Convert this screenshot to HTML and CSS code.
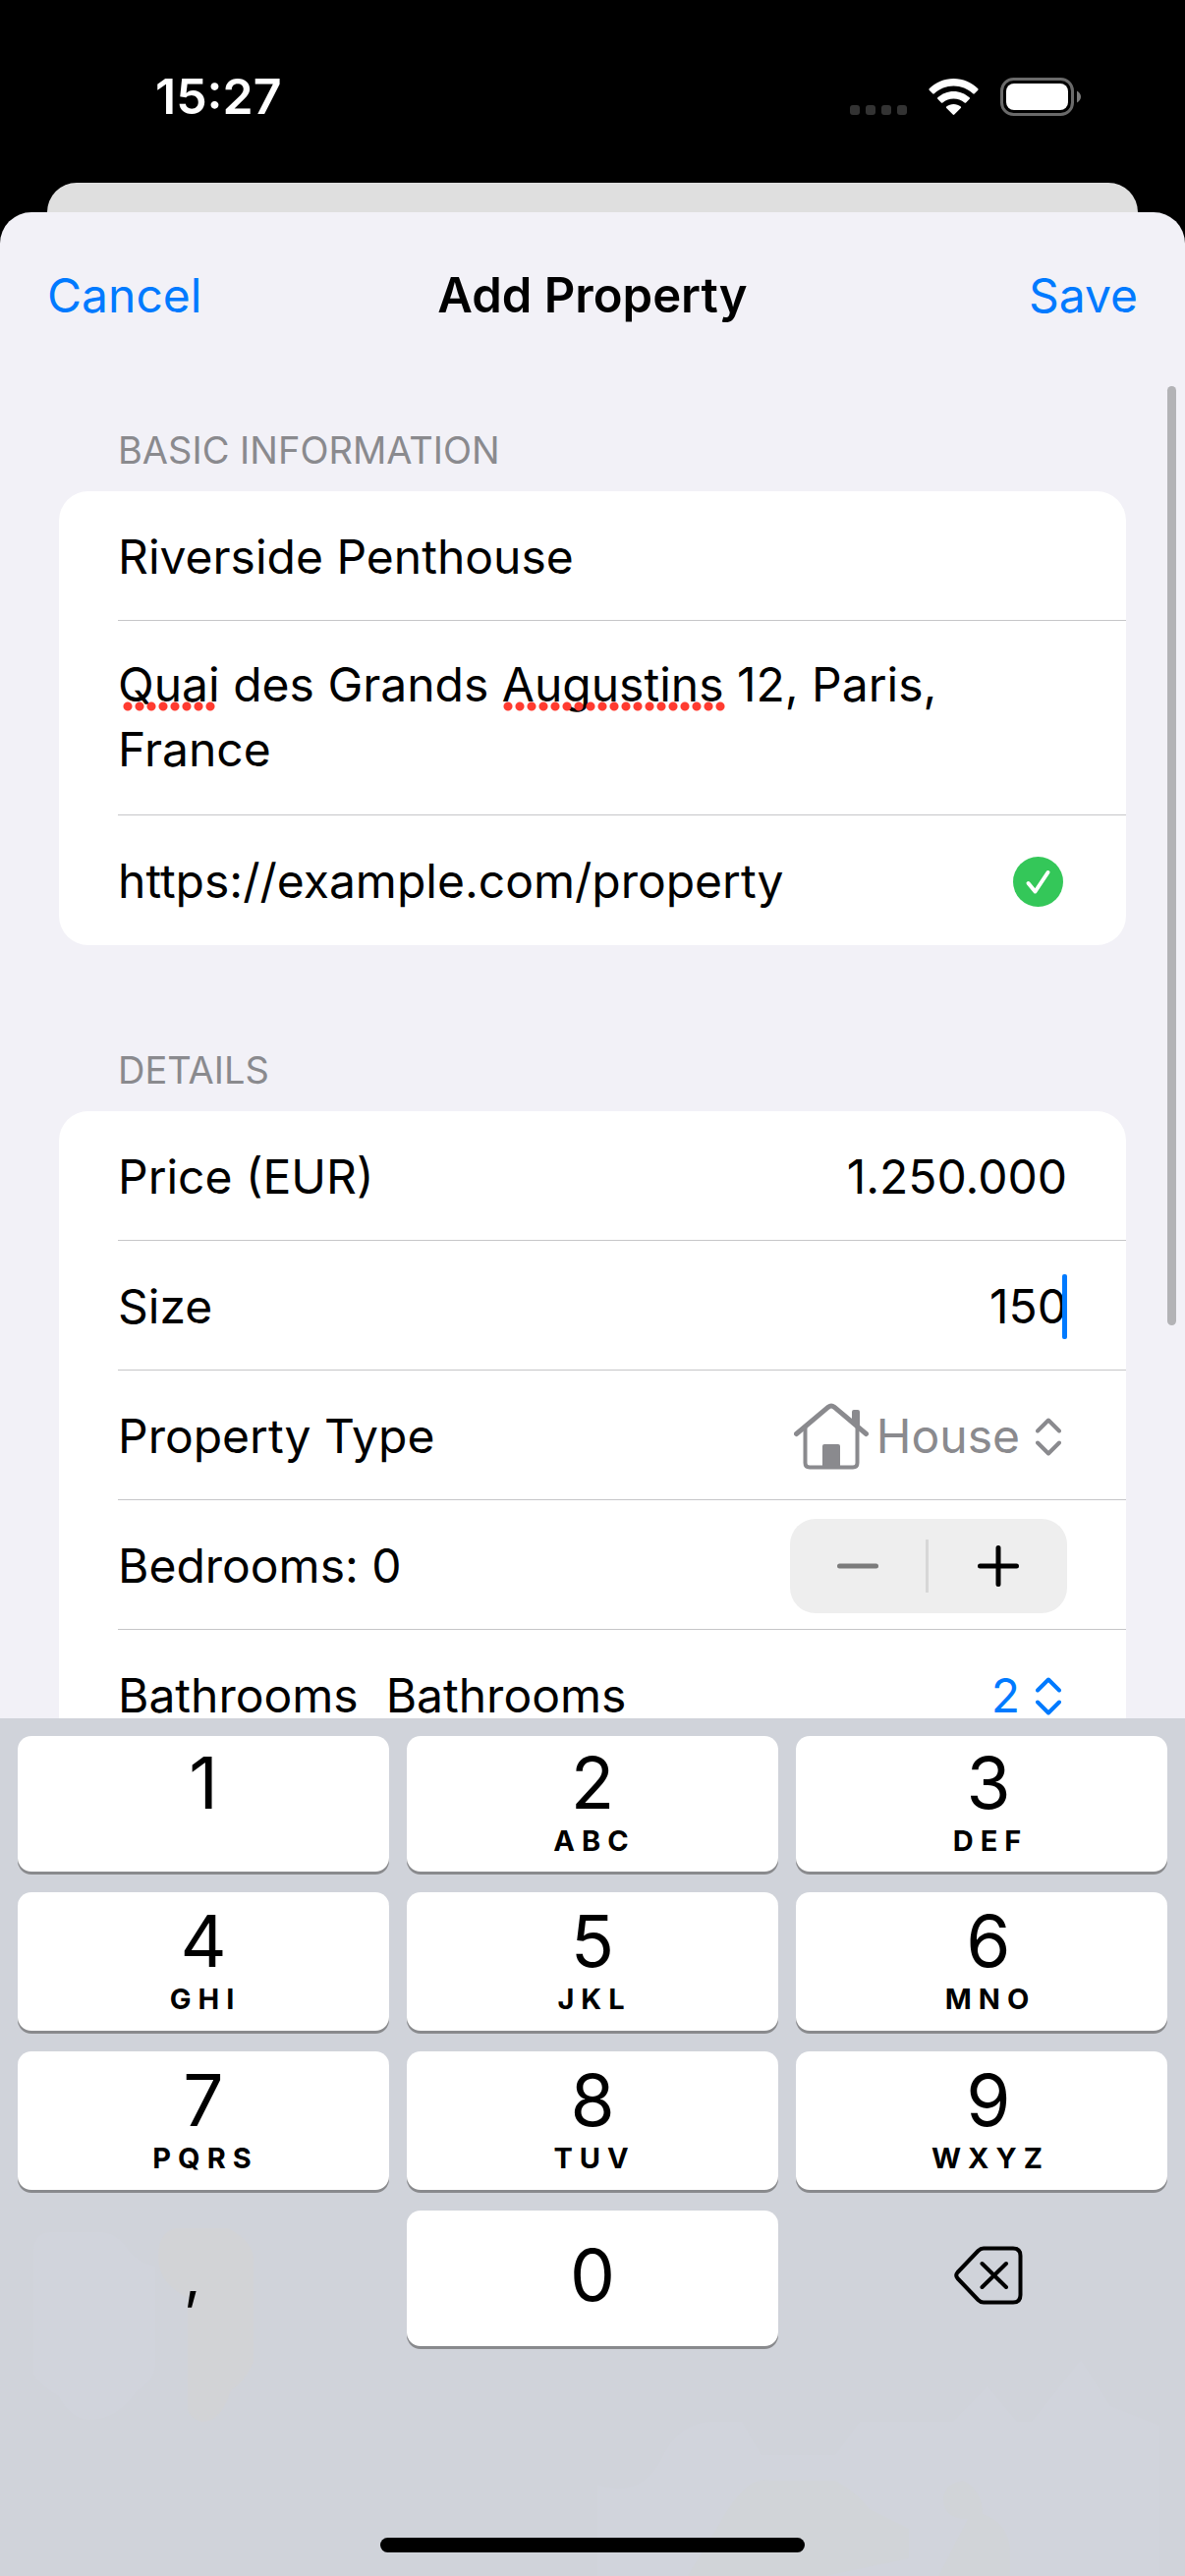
FILE: index.html
```html
<!DOCTYPE html>
<html lang="en">
<head>
<meta charset="utf-8">
<meta name="viewport" content="width=device-width, initial-scale=1">
<title>Add Property</title>
<link rel="stylesheet" href="styles.css">
</head>
<body>
<div class="status-bar">
  <time class="clock">15:27</time>
  <div class="status-icons" aria-hidden="true">
    <svg width="58" height="39" viewBox="0 0 58 39" fill="#333"><rect x="0" y="28" width="10" height="10" rx="3"/><rect x="16" y="28" width="10" height="10" rx="3"/><rect x="32" y="28" width="10" height="10" rx="3"/><rect x="48" y="28" width="10" height="10" rx="3"/></svg>
    <svg width="51" height="39" viewBox="0 0 51 39" fill="#fff"><path d="M25.500 1C35 1 44 4.800 50.300 11.300Q51 12 50.300 12.800L46.800 16.300Q46 17 45.200 16.300C39.900 11.200 33 8.400 25.500 8.400S11.100 11.200 5.800 16.300Q5 17 4.200 16.300L.7 12.800Q0 12 .7 11.300C7 4.800 16 1 25.500 1Z"/><path d="M25.500 14C31.600 14 37.300 16.300 41.700 20.300Q42.500 21 41.700 21.800L38.100 25.400Q37.400 26 36.600 25.400C33.500 22.800 29.700 21.400 25.500 21.400S17.500 22.800 14.400 25.400Q13.600 26 12.900 25.400L9.300 21.800Q8.500 21 9.300 20.300C13.700 16.300 19.400 14 25.500 14Z"/><path d="M25.500 27C28.200 27 30.800 27.900 32.800 29.600Q33.600 30.300 32.800 31L26.300 37.500Q25.500 38.300 24.700 37.500L18.200 31Q17.400 30.300 18.200 29.600C20.200 27.900 22.800 27 25.500 27Z"/></svg>
    <svg width="82" height="39" viewBox="0 0 82 39"><rect x="1.500" y="1.500" width="72" height="36" rx="12" fill="none" stroke="#6a6a6a" stroke-width="3"/><rect x="6" y="6" width="63" height="27" rx="8" fill="#fff"/><path d="M78 13.500Q82 16 82 19.500T78 25.500Z" fill="#7a7a7a"/></svg>
  </div>
</div>
<div class="card-behind"></div>

<main class="sheet">
  <header class="nav">
    <button type="button" class="nav-button">Cancel</button>
    <h1>Add Property</h1>
    <button type="button" class="nav-button nav-save">Save</button>
  </header>

  <form class="form">
    <section class="group">
      <h2>Basic Information</h2>
      <div class="card">
        <div class="row">
          <input type="text" class="field" aria-label="Title" value="Riverside Penthouse">
        </div>
        <div class="row">
          <div class="address">
            <textarea class="field" rows="2" aria-label="Address" spellcheck="false">Quai des Grands Augustins 12, Paris, France</textarea>
            <span class="misspelling" style="left: 4px; width: 96px"></span>
            <span class="misspelling" style="left: 391px; width: 228px"></span>
          </div>
        </div>
        <div class="row">
          <input type="url" class="field" aria-label="Link" value="https://example.com/property">
          <svg class="valid" width="51" height="51" viewBox="0 0 51 51" role="img" aria-label="Valid link"><circle cx="25.500" cy="25.500" r="25.500" fill="#34c759"/><path d="M15.500 27L22.500 35.500L35.500 16" fill="none" stroke="#fff" stroke-width="4" stroke-linecap="round" stroke-linejoin="round"/></svg>
        </div>
      </div>
    </section>

    <section class="group">
      <h2>Details</h2>
      <div class="card">
        <div class="row">
          <label for="price">Price (EUR)</label>
          <input id="price" type="text" class="field number" inputmode="numeric" value="1.250.000">
        </div>
        <div class="row">
          <label for="size">Size</label>
          <div class="editing">
            <input id="size" type="text" class="field number" inputmode="numeric" value="150">
            <span class="caret"></span>
          </div>
        </div>
        <div class="row">
          <label for="type">Property Type</label>
          <div class="picker muted">
            <svg width="76" height="68" viewBox="0 0 76 68" fill="none" stroke="currentColor" stroke-width="5" stroke-linecap="round" stroke-linejoin="round" aria-hidden="true"><path d="M2.500 31.500L35 4.200Q38 1.800 41 4.200L73.500 31.500"/><path stroke-width="4" d="M11.500 25V61Q11.500 65.500 16 65.500H60Q64.500 65.500 64.500 61V25"/><path d="M60 9Q60 8 61 8H65Q66 8 66 9V25L60 20Z" fill="currentColor" stroke-width="2"/><path d="M29 65V44Q29 42 31 42H45Q47 42 47 44V65Z" fill="currentColor" stroke="none"/></svg>
            <select id="type"><option>House</option></select>
            <svg class="chevrons" width="26" height="39" viewBox="0 0 26 39" aria-hidden="true"><path d="M2 13.500L13 2.500L24 13.500M2 25.500L13 36.500L24 25.500"/></svg>
          </div>
        </div>
        <div class="row">
          <span>Bedrooms: 0</span>
          <div class="stepper">
            <button type="button" aria-label="Decrease bedrooms" disabled><svg width="42" height="42" viewBox="0 0 42 42"><path d="M2.500 21H39.500"/></svg></button>
            <button type="button" aria-label="Increase bedrooms"><svg width="42" height="42" viewBox="0 0 42 42"><path d="M2.500 21H39.500M21 2.500V39.500"/></svg></button>
          </div>
        </div>
        <div class="row">
          <label for="bathrooms" class="double-label"><span>Bathrooms</span><span>Bathrooms</span></label>
          <div class="picker accent">
            <select id="bathrooms"><option>2</option></select>
            <svg class="chevrons" width="26" height="39" viewBox="0 0 26 39" aria-hidden="true"><path d="M2 13.500L13 2.500L24 13.500M2 25.500L13 36.500L24 25.500"/></svg>
          </div>
        </div>
      </div>
    </section>
  </form>
  <div class="scroll-thumb"></div>
</main>

<footer class="keyboard">
  <svg class="tint" viewBox="0 0 1206 873" preserveAspectRatio="none" aria-hidden="true">
    <path fill="#d1d4dc" d="M34 540Q36 523 52 523H105Q122 526 130 540Q140 554 158 558V660Q155 677 140 684Q120 714 90 714Q70 712 60 690Q34 675 34 665Z"/>
    <path fill="#d2d3d6" d="M178 519H232Q258 533 258 550V655Q250 675 235 684Q225 716 206 716Q191 712 191 700V590Q161 575 161 548Q161 524 178 519Z"/>
    <path fill="#d1d4dc" d="M608 873V780Q655 795 675 750Q690 720 720 716H755L775 750H850L875 716H970L1005 680L1035 716H1050L1100 653L1130 700L1180 720V873Z"/>
    <path fill="#d1d4d8" d="M700 873L735 815Q760 770 785 776H850Q875 790 885 805L925 825V855L840 873Z"/>
    <path fill="#d1d4d8" d="M955 873L985 815Q960 815 960 795Q960 780 980 776Q1000 785 1000 810Q1028 820 1028 850V873Z"/>
  </svg>
  <div class="keys">
    <button type="button" class="key"><b>1</b><small>&nbsp;</small></button>
    <button type="button" class="key"><b>2</b><small>ABC</small></button>
    <button type="button" class="key"><b>3</b><small>DEF</small></button>
    <button type="button" class="key"><b>4</b><small>GHI</small></button>
    <button type="button" class="key"><b>5</b><small>JKL</small></button>
    <button type="button" class="key"><b>6</b><small>MNO</small></button>
    <button type="button" class="key"><b>7</b><small>PQRS</small></button>
    <button type="button" class="key"><b>8</b><small>TUV</small></button>
    <button type="button" class="key"><b>9</b><small>WXYZ</small></button>
    <button type="button" class="key last plain comma"><b>,</b></button>
    <button type="button" class="key last"><b>0</b></button>
    <button type="button" class="key last plain" aria-label="Delete"><svg width="70" height="60" viewBox="0 0 70 60" fill="none" stroke="#000" stroke-width="4" stroke-linecap="round" stroke-linejoin="round"><path d="M30 2.500H60Q67.500 2.500 67.500 10V50Q67.500 57.500 60 57.500H30Q27 57.500 24.500 55L3.500 33Q1 30 3.500 27L24.500 5Q27 2.500 30 2.500Z"/><path d="M28.500 18L53 42M53 18L28.500 42"/></svg></button>
  </div>
  <div class="home-indicator"></div>
</footer>
</body>
</html>
```
FILE: styles.css
```css
* {
  box-sizing: border-box;
}

body {
  margin: 0;
  height: 100vh;
  display: flex;
  flex-direction: column;
  background: #000;
  color: #000;
  font: 400 48px/66px Inter, "Liberation Sans", sans-serif;
  overflow: hidden;
}

button,
input,
textarea,
select {
  margin: 0;
  padding: 0;
  border: 0;
  border-radius: 0;
  background: none;
  color: inherit;
  font: inherit;
  outline: none;
}

svg {
  display: block;
  flex: none;
}

/* Status bar */
.status-bar {
  display: flex;
  justify-content: space-between;
  align-items: center;
  padding: 65px 106px 55px 158px;
  color: #fff;
}

.clock {
  font-size: 50px;
  font-weight: 600;
}

.status-icons {
  display: flex;
  gap: 22px;
}

/* Sheet */
.card-behind {
  height: 30px;
  margin: 0 48px;
  border-radius: 30px 30px 0 0;
  background: #dfdfdf;
}

.sheet {
  position: relative;
  flex: 1;
  min-height: 0;
  display: flex;
  flex-direction: column;
  border-radius: 32px 32px 0 0;
  background: #f2f1f7;
  overflow: hidden;
}

.nav {
  display: grid;
  grid-template-columns: 1fr auto 1fr;
  padding: 52px 48px 50px;
}

.nav h1 {
  margin: 0;
  font-size: 49px;
  font-weight: 600;
}

.nav-button {
  justify-self: start;
  color: #007aff;
}

.nav-save {
  justify-self: end;
}

.form {
  flex: 1;
  min-height: 0;
  display: flex;
  flex-direction: column;
  gap: 103px;
  padding: 50px 60px 0;
  overflow: hidden;
}

.group h2 {
  margin: 0;
  padding: 0 60px 18px;
  color: #8a8a8e;
  font-size: 38px;
  font-weight: 400;
  line-height: 48px;
  text-transform: uppercase;
}

.card {
  padding-left: 60px;
  border-radius: 30px;
  background: #fff;
}

.row {
  display: flex;
  align-items: center;
  justify-content: space-between;
  min-height: 132px;
  padding: 3px 60px 0 0;
  border-bottom: 1px solid #c6c6c8;
}

.row:last-child {
  border-bottom-color: transparent;
}

.field {
  display: block;
  flex: 1;
  width: 100%;
  min-width: 0;
  height: 66px;
}

.number {
  text-align: right;
}

.address {
  position: relative;
  width: 100%;
  padding: 29px 0 33px;
}

.address .field {
  height: 132px;
  resize: none;
  overflow: hidden;
}

.misspelling {
  position: absolute;
  top: 78px;
  height: 12px;
  background: radial-gradient(circle, #ff3b30 4px, transparent 5px) 0 0 / 12px 12px;
}

.valid {
  margin-right: 4px;
}

.editing {
  position: relative;
  flex: 1;
}

.caret {
  position: absolute;
  top: 0;
  right: 0;
  width: 5px;
  height: 66px;
  border-radius: 2px;
  background: #007aff;
}

.picker {
  display: flex;
  align-items: center;
  gap: 8px;
  padding-right: 6px;
}

.picker select {
  appearance: none;
  field-sizing: content;
}

.muted {
  color: #8a8a8e;
}

.accent {
  color: #007aff;
}

.chevrons {
  margin-left: 8px;
  fill: none;
  stroke: currentColor;
  stroke-width: 4px;
  stroke-linecap: round;
  stroke-linejoin: round;
}

.stepper {
  display: grid;
  grid-template-columns: 1fr 1fr;
  align-items: center;
  width: 282px;
  height: 96px;
  border-radius: 26px;
  background: #eee;
}

.stepper button {
  display: flex;
  justify-content: center;
  align-items: center;
  height: 54px;
}

.stepper button:first-child {
  border-right: 3px solid #d7d7d7;
}

.stepper path {
  stroke: #000;
  stroke-width: 5px;
  stroke-linecap: round;
}

.stepper button:disabled path {
  stroke: #7b7b7b;
}

.double-label {
  display: flex;
  gap: 28px;
}

.scroll-thumb {
  position: absolute;
  top: 177px;
  right: 9px;
  bottom: 400px;
  width: 9px;
  border-radius: 5px;
  background: #b3b3b6;
}

/* Keyboard */
.keyboard {
  position: relative;
  padding: 18px 18px 24px;
  background: #d0d3da;
}

.tint {
  position: absolute;
  inset: 0;
  width: 100%;
  height: 100%;
}

.keys {
  position: relative;
  display: grid;
  grid-template-columns: repeat(3, 1fr);
  grid-template-rows: 141px 144px 144px 141px;
  gap: 18px;
}

.key {
  display: flex;
  flex-direction: column;
  align-items: center;
  justify-content: center;
  margin-bottom: 3px;
  padding-bottom: 2px;
  border-radius: 14px;
  background: #fff;
  box-shadow: 0 3px 0 #898a8d;
}

.key:nth-child(3n) {
  padding-left: 14px;
}

.key b {
  font-size: 73px;
  font-weight: 400;
  line-height: 78px;
}

.key small {
  padding-left: 4px;
  font-size: 29px;
  font-weight: 700;
  line-height: 40px;
  letter-spacing: 7px;
}

.last {
  padding-bottom: 6px;
}

.plain {
  background: none;
  box-shadow: none;
}

.comma {
  padding-right: 22px;
}

.comma b {
  font-size: 60px;
}

.home-indicator {
  position: relative;
  width: 432px;
  height: 15px;
  margin: 192px auto 0;
  border-radius: 8px;
  background: #000;
}
```
